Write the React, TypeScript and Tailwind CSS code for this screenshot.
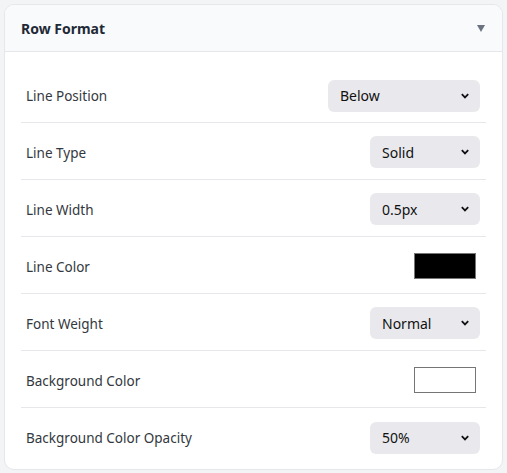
import React from 'react';

type Row = {
  label: string;
  kind: 'select' | 'color';
  value: string;
  options?: string[];
  width?: string;
};

const rows: Row[] = [
  { label: 'Line Position', kind: 'select', value: 'Below', options: ['Above', 'Below', 'Both'], width: 'w-[152px]' },
  { label: 'Line Type', kind: 'select', value: 'Solid', options: ['Solid', 'Dashed', 'Dotted'], width: 'w-[110px]' },
  { label: 'Line Width', kind: 'select', value: '0.5px', options: ['0.5px', '1px', '2px'], width: 'w-[110px]' },
  { label: 'Line Color', kind: 'color', value: '#000000' },
  { label: 'Font Weight', kind: 'select', value: 'Normal', options: ['Normal', 'Bold'], width: 'w-[110px]' },
  { label: 'Background Color', kind: 'color', value: '#ffffff' },
  { label: 'Background Color Opacity', kind: 'select', value: '50%', options: ['0%', '25%', '50%', '75%', '100%'], width: 'w-[110px]' },
];

function Chevron() {
  return (
    <svg width="10" height="6" viewBox="0 0 10 6" className="pointer-events-none absolute right-[10px] top-1/2 -translate-y-1/2">
      <path d="M1.8 1.2 L5 4.4 L8.2 1.2" fill="none" stroke="#111" strokeWidth="1.8" />
    </svg>
  );
}

export default function App() {
  return (
    <div className="min-h-screen bg-[#f3f4f6] p-1" style={{ fontFamily: '"Noto Sans", sans-serif' }}>
      <div className="h-[466px] bg-white border border-[#e5e7eb] rounded-[10px] overflow-hidden flex flex-col">
        {/* header */}
        <div className="h-[47px] shrink-0 bg-[#f9fafb] border-b border-[#e5e7eb] pl-4 pr-[17px] flex items-center justify-between">
          <span className="text-[14px] font-bold text-[#1f2937]">Row Format</span>
          <svg width="8" height="7" viewBox="0 0 8 7">
            <path d="M0 0 H8 L4 7 Z" fill="#6b7280" />
          </svg>
        </div>

        {/* rows */}
        <div className="px-4 pt-[15px] pb-1">
          {rows.map((row, i) => (
            <div
              key={row.label}
              className={`${i === 0 ? 'h-[56px]' : 'h-[57px]'} flex items-center justify-between pl-[5px] pr-[6px] ${i < rows.length - 1 ? 'border-b border-[#e5e7eb]' : ''}`}
            >
              <span className="text-[13.5px] text-[#333840] translate-y-[2px]">{row.label}</span>
              {row.kind === 'select' ? (
                <div className={`relative ${row.width} translate-y-[1px]`}>
                  <select
                    defaultValue={row.value}
                    className="appearance-none w-full h-[32px] rounded-md bg-[#e9e9ed] pl-3 pr-7 text-[14px] text-[#111] outline-none"
                  >
                    {row.options!.map((o) => (
                      <option key={o} value={o}>{o}</option>
                    ))}
                  </select>
                  <Chevron />
                </div>
              ) : (
                <div
                  className="w-[62px] h-[26px] mr-[4px] border border-[#767676] translate-y-[1px]"
                  style={{ backgroundColor: row.value }}
                />
              )}
            </div>
          ))}
        </div>
      </div>
    </div>
  );
}
